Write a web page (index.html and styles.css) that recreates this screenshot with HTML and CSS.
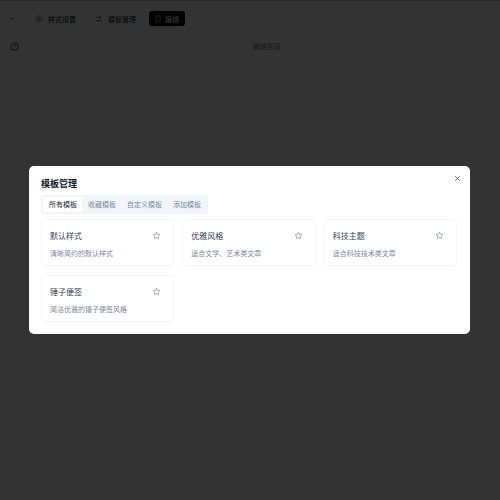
FILE: index.html
```html
<!DOCTYPE html>
<html lang="zh-CN">
<head>
    <meta charset="UTF-8">
    <meta name="viewport" content="width=device-width, initial-scale=1.0">
    <title>模板管理</title>
    <link rel="stylesheet" href="styles.css">
</head>
<body>

    <header class="toolbar">
        <svg class="icon chevron" viewBox="0 0 24 24"><path d="M6 9l6 6 6-6"/></svg>
        <div class="tool-btn tool-first">
            <svg class="icon" viewBox="0 0 24 24"><circle cx="12" cy="12" r="3"/><circle cx="12" cy="12" r="9" stroke-dasharray="4 2"/></svg>
            样式设置
        </div>
        <div class="tool-btn">
            <svg class="icon" viewBox="0 0 24 24"><path d="M3 7h14M14 3l4 4-4 4M21 17H7M10 13l-4 4 4 4"/></svg>
            模板管理
        </div>
        <div class="tool-btn active">
            <svg class="icon" viewBox="0 0 24 24"><rect x="6" y="3" width="12" height="18" rx="2"/></svg>
            编辑
        </div>
    </header>

    <div class="subbar">
        <svg class="icon help" viewBox="0 0 24 24"><circle cx="12" cy="12" r="10"/><path d="M9 9a3 3 0 0 1 6 0c0 2-3 2-3 4M12 17h.01"/></svg>
        <span class="subbar-title">微信预览</span>
    </div>

    <!-- dialog -->
    <div class="overlay">
        <div class="modal">
            <svg class="close" viewBox="0 0 24 24"><path d="M6 6l12 12M18 6L6 18"/></svg>
            <h2 class="modal-title">模板管理</h2>
            <div class="tabs">
                <span class="tab selected">所有模板</span>
                <span class="tab">收藏模板</span>
                <span class="tab">自定义模板</span>
                <span class="tab">添加模板</span>
            </div>
            <div class="cards">
                <div class="card">
                    <div class="card-head">
                        <h3>默认样式</h3>
                        <svg class="star" viewBox="0 0 24 24"><path d="M12 3l2.8 5.7 6.2.9-4.5 4.4 1.1 6.2-5.6-3-5.6 3 1.1-6.2L3 9.6l6.2-.9z"/></svg>
                    </div>
                    <p>清晰简约的默认样式</p>
                </div>
                <div class="card">
                    <div class="card-head">
                        <h3>优雅风格</h3>
                        <svg class="star" viewBox="0 0 24 24"><path d="M12 3l2.8 5.7 6.2.9-4.5 4.4 1.1 6.2-5.6-3-5.6 3 1.1-6.2L3 9.6l6.2-.9z"/></svg>
                    </div>
                    <p>适合文学、艺术类文章</p>
                </div>
                <div class="card">
                    <div class="card-head">
                        <h3>科技主题</h3>
                        <svg class="star" viewBox="0 0 24 24"><path d="M12 3l2.8 5.7 6.2.9-4.5 4.4 1.1 6.2-5.6-3-5.6 3 1.1-6.2L3 9.6l6.2-.9z"/></svg>
                    </div>
                    <p>适合科技技术类文章</p>
                </div>
                <div class="card">
                    <div class="card-head">
                        <h3>锤子便签</h3>
                        <svg class="star" viewBox="0 0 24 24"><path d="M12 3l2.8 5.7 6.2.9-4.5 4.4 1.1 6.2-5.6-3-5.6 3 1.1-6.2L3 9.6l6.2-.9z"/></svg>
                    </div>
                    <p>简洁优雅的锤子便签风格</p>
                </div>
            </div>
        </div>
    </div>

</body>
</html>
```

FILE: styles.css
```css
body {
    font-family: "Noto Sans CJK SC", "Noto Sans", sans-serif;
    background-color: #fff;
    color: #0f172a;
    margin: 0;
    padding: 0;
    height: 500px;
    overflow: hidden;
}

.icon {
    width: 8px;
    height: 8px;
    fill: none;
    stroke: currentColor;
    stroke-width: 2;
    flex: none;
}

.toolbar {
    display: flex;
    align-items: center;
    gap: 7px;
    height: 36px;
    padding: 0 7px;
    border-top: 1px solid #ccc;
    box-sizing: border-box;
}

.chevron {
    width: 9px;
    height: 9px;
    color: #0f172a;
}

.tool-btn {
    display: flex;
    align-items: center;
    gap: 5px;
    height: 15px;
    padding: 0 6px;
    font-size: 7px;
    border-radius: 3px;
}

.tool-first {
    margin-left: 6px;
}

.tool-btn.active {
    background-color: #000;
    color: #fff;
    padding: 0 6px 0 5px;
    gap: 3px;
}

.subbar {
    display: flex;
    align-items: center;
    position: relative;
    height: 20px;
    padding: 0 10px;
}

.help {
    width: 9px;
    height: 9px;
}

.subbar-title {
    margin-left: 234px;
    font-size: 7px;
    color: #64748b;
}

.overlay {
    position: fixed;
    inset: 0;
    padding-right: 1px;
    background-color: rgba(0, 0, 0, 0.8);
    display: flex;
    align-items: center;
    justify-content: center;
}

.modal {
    position: relative;
    width: 441px;
    height: 168px;
    box-sizing: border-box;
    padding: 12px;
    background-color: #fff;
    border-radius: 5px;
}

.close {
    position: absolute;
    top: 8px;
    right: 8px;
    width: 9px;
    height: 9px;
    fill: none;
    stroke: #475569;
    stroke-width: 2.2;
}

.modal-title {
    margin: 0 0 6px;
    font-size: 9px;
    line-height: 11px;
    font-weight: 700;
}

.tabs {
    display: flex;
    width: fit-content;
    align-items: center;
    height: 19px;
    padding: 0 2px;
    box-sizing: border-box;
    background-color: #f1f5f9;
    border-radius: 3px;
    color: #7c8aa0;
    font-size: 7px;
}

.tab {
    padding: 0 5px 0 6px;
    line-height: 15px;
    white-space: nowrap;
}

.tab.selected {
    background-color: #fff;
    color: #1e293b;
    border-radius: 2px;
}

.cards {
    display: grid;
    grid-template-columns: repeat(3, 1fr);
    gap: 9px 8px;
    margin: 5px 1px 0 0;
}

.card {
    height: 47px;
    box-sizing: border-box;
    padding: 9px 8px;
    border: 1px solid #f3f5f8;
    border-radius: 4px;
    box-shadow: 0 1px 1px rgba(0, 0, 0, 0.02);
}

.card-head {
    display: flex;
    align-items: center;
    justify-content: space-between;
    height: 12px;
    padding-right: 4px;
}

.card h3 {
    margin: 0;
    font-size: 8px;
    font-weight: 400;
    color: #334155;
}

.star {
    width: 9px;
    height: 9px;
    fill: none;
    stroke: #858b94;
    stroke-width: 1.8;
    stroke-linejoin: round;
}

.card p {
    margin: 7px 0 0;
    font-size: 7px;
    line-height: 11px;
    color: #7c8aa0;
}
```
